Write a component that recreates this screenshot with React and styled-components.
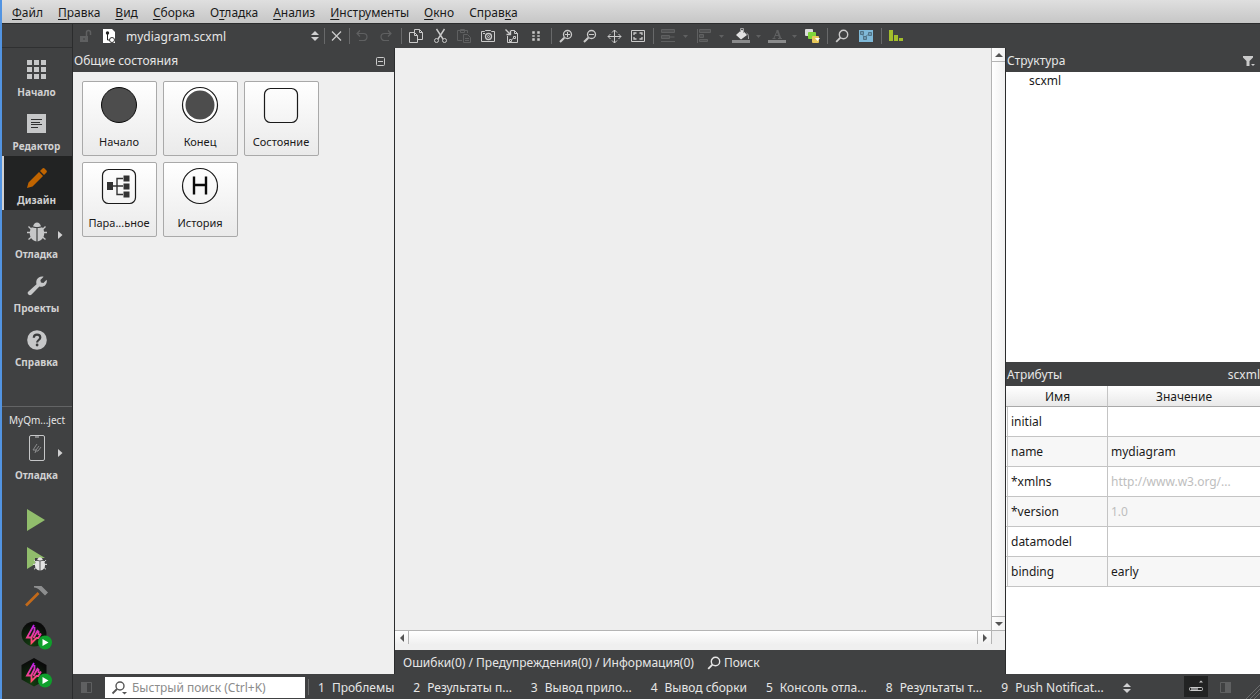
import { useState } from "react";
import styled, { createGlobalStyle } from "styled-components";

const GlobalStyle = createGlobalStyle`
  * {
    box-sizing: border-box;
  }
  body {
    margin: 0;
    font-family: "Noto Sans", "Open Sans", sans-serif;
    font-size: 12px;
    line-height: 16px;
    color: #1a1a1a;
    overflow: hidden;
  }
  button,
  input,
  select {
    font: inherit;
    color: inherit;
    margin: 0;
    padding: 0;
    border: none;
    border-radius: 0;
    background: none;
    outline: none;
  }
  svg {
    display: block;
    flex: none;
  }
`;

const Window = styled.div`
  height: 100vh;
  display: flex;
  flex-direction: column;
  border-left: 2px solid #5294e2;
  background-color: #404142;
`;
const MenuBar = styled.nav`
  display: flex;
  align-items: center;
  gap: 15px;
  height: 24px;
  flex: none;
  padding: 3px 10px 0;
  border-bottom: 1px solid #2b2c2d;
  background: linear-gradient(#dfdfdf, #c6c6c6);
`;
const MenuItem = styled.button`
  white-space: nowrap;
`;
const Mnemonic = styled.span`
  text-decoration: underline;
  text-decoration-thickness: 1px;
  text-underline-offset: 2px;
  text-decoration-skip-ink: none;
`;
const Body = styled.div`
  display: flex;
  flex: 1;
  min-height: 0;
`;

const Sidebar = styled.aside`
  display: flex;
  flex-direction: column;
  width: 71px;
  flex: none;
  border-right: 1px solid #2b2c2d;
  color: #d0d0d1;
`;
const SidebarTop = styled.div`
  height: 24px;
  flex: none;
  border-bottom: 1px solid #2f3031;
`;
const ModeButton = styled.button`
  position: relative;
  display: flex;
  flex-direction: column;
  align-items: center;
  height: 54px;
  flex: none;
  padding: 12px 3px 0 0;
  gap: 4px;
  border-left: 2px solid ${(props) => (props.$active ? "#d0d0d1" : "transparent")};
  background-color: ${(props) => (props.$active ? "#222323" : "transparent")};
  font-size: 10px;
  font-weight: bold;
`;
const Flyout = styled.svg`
  position: absolute;
  right: 9px;
  top: 21px;
`;
const Kit = styled.div`
  display: flex;
  flex-direction: column;
  margin-top: auto;
  height: 95px;
  flex: none;
  padding-top: 5px;
  border-top: 1px solid #636465;
`;
const KitName = styled.span`
  text-align: center;
  font-size: 10px;
  color: #e6e6e6;
`;
const KitButton = styled(ModeButton)`
  padding-top: 6px;
  gap: 5px;
`;
const RunList = styled.div`
  display: flex;
  flex-direction: column;
  align-items: center;
  padding: 0 2px 8px 0;
  flex: none;
`;
const RunButton = styled.button`
  display: flex;
  align-items: center;
  justify-content: center;
  width: 40px;
  height: 38px;
`;

const Main = styled.main`
  display: flex;
  flex-direction: column;
  flex: 1;
  min-width: 0;
  color: #e6e6e6;
`;
const Toolbar = styled.div`
  display: flex;
  align-items: center;
  height: 24px;
  flex: none;
`;
const ToolButton = styled.button`
  display: flex;
  align-items: center;
  justify-content: center;
  gap: 6px;
  width: ${(props) => (props.$menu ? "36px" : "24px")};
  height: 24px;
  flex: none;
  color: ${(props) => (props.$off ? "#5f6061" : "#cacaca")};
`;
const Separator = styled.div`
  width: 1px;
  height: 16px;
  flex: none;
  margin: ${(props) => (props.$tight ? "0" : "0 2px 0 3px")};
  background-color: #68696a;
`;
const FileBox = styled.div`
  display: flex;
  align-items: center;
  width: 227px;
  flex: none;
  padding: 0 5px 0 5px;
  gap: 10px;
`;
const FileSelect = styled.select`
  appearance: none;
  flex: 1;
  height: 24px;
  padding-top: 2px;
`;

const Panels = styled.div`
  display: flex;
  flex: 1;
  min-height: 0;
`;
const PaletteColumn = styled.section`
  display: flex;
  flex-direction: column;
  width: 322px;
  flex: none;
  border-right: 1px solid #2b2c2d;
`;
const PanelHeader = styled.header`
  display: flex;
  align-items: center;
  justify-content: space-between;
  height: 24px;
  flex: none;
  padding-top: 2px;
  padding-left: 1px;
  padding-right: ${(props) => props.$right || "0"};
`;
const Palette = styled.div`
  display: flex;
  flex-wrap: wrap;
  align-content: flex-start;
  gap: 6px;
  flex: 1;
  padding: 9px;
  background-color: #efefef;
`;
const PaletteItem = styled.button`
  display: flex;
  flex-direction: column;
  align-items: center;
  justify-content: space-between;
  width: 75px;
  height: 75px;
  padding: 4px 1px 5px 0;
  border: 1px solid #a9a9a9;
  border-radius: 2px;
  background: linear-gradient(#ffffff, #eaeaea);
  font-size: 11px;
  color: #1a1a1a;
`;

const Center = styled.section`
  display: flex;
  flex-direction: column;
  flex: 1;
  min-width: 0;
`;
const CanvasArea = styled.div`
  display: grid;
  grid-template-columns: 1fr 14px;
  grid-template-rows: 1fr 14px;
  flex: 1;
  padding-bottom: 6px;
  background-color: #efefef;
`;
const Canvas = styled.div`
  background-color: #eeeeee;
`;
const ScrollBar = styled.div`
  display: flex;
  flex-direction: ${(props) => (props.$vertical ? "column" : "row")};
  background: linear-gradient(${(props) => (props.$vertical ? "to right" : "to bottom")}, #ffffff, #f0f0f0);
  border: 0 solid #b4b4b4;
  border-left-width: ${(props) => (props.$vertical ? "1px" : "0")};
  border-top-width: ${(props) => (props.$vertical ? "0" : "1px")};
`;
const ScrollTrack = styled.div`
  flex: 1;
  border: 0 solid #b4b4b4;
  border-width: ${(props) => (props.$vertical ? "1px 0" : "0 1px")};
`;
const ScrollButton = styled.button`
  display: flex;
  align-items: center;
  justify-content: center;
  width: 13px;
  height: 13px;
  flex: none;
`;
const Corner = styled.div`
  border-top: 1px solid #b4b4b4;
  border-left: 1px solid #b4b4b4;
`;
const ErrorBar = styled.div`
  display: flex;
  align-items: center;
  gap: 12px;
  height: 24px;
  flex: none;
  padding: 2px 0 0 8px;
  white-space: nowrap;
`;
const SearchButton = styled.button`
  display: flex;
  align-items: center;
  gap: 2px;
`;

const Inspector = styled.section`
  display: flex;
  flex-direction: column;
  width: 255px;
  flex: none;
  border-left: 1px solid #2b2c2d;
`;
const Tree = styled.ul`
  flex: 1;
  margin: 0;
  padding: 1px 0 0 23px;
  background-color: #ffffff;
  color: #1a1a1a;
  list-style: none;
`;
const Attributes = styled.div`
  flex: 1;
  background-color: #ffffff;
`;
const Table = styled.table`
  width: 100%;
  table-layout: fixed;
  border-collapse: separate;
  border-spacing: 0;
  color: #1a1a1a;
`;
const HeadCell = styled.th`
  width: ${(props) => props.$width || "auto"};
  height: 21px;
  padding: 2px 0 0 2px;
  border-right: 1px solid #c4c4c4;
  border-bottom: 1px solid #a9a9a9;
  background: linear-gradient(#ffffff, #e9e9e9);
  font-weight: normal;

  &:last-child {
    padding-left: 0;
    border-right: none;
  }
`;
const Row = styled.tr`
  background-color: #ffffff;

  &:nth-child(even) {
    background-color: #f7f7f7;
  }
`;
const Cell = styled.td`
  height: 30px;
  padding: 2px 3px 0;
  border-right: 1px solid #c4c4c4;
  border-bottom: 1px solid #c4c4c4;
  color: ${(props) => (props.$muted ? "#bebebe" : "#1a1a1a")};

  &:first-child {
    padding-left: 5px;
    box-shadow: inset 1px 0 #ffffff, inset 2px 0 #c4c4c4;
  }
  &:last-child {
    border-right: none;
  }
`;

const StatusBar = styled.footer`
  display: flex;
  align-items: center;
  height: 25px;
  flex: none;
  white-space: nowrap;
`;
const StatusToggle = styled.button`
  display: flex;
  align-items: center;
  justify-content: center;
  width: 24px;
  height: 21px;
  flex: none;
  margin-left: ${(props) => props.$left || "0"};
  background-color: ${(props) => (props.$active ? "#222323" : "transparent")};
  color: ${(props) => (props.$off ? "#5f6061" : "#cacaca")};
`;
const Locator = styled.label`
  display: flex;
  align-items: center;
  gap: 3px;
  width: 200px;
  height: 21px;
  flex: none;
  margin: 2px 0 0 7px;
  padding-left: 6px;
  background-color: #ffffff;
`;
const LocatorInput = styled.input`
  flex: 1;
  min-width: 0;
  color: #1a1a1a;

  &::placeholder {
    color: #8c8c8c;
    opacity: 1;
  }
`;
const PaneTabs = styled.div`
  display: flex;
  align-items: center;
  gap: 19px;
  padding: 2px 0 0 7px;
`;
const PaneTab = styled.button`
  display: flex;
  gap: 7px;
`;
const StatusEnd = styled.div`
  display: flex;
  align-items: center;
  justify-content: flex-end;
  gap: 7px;
  flex: 1;
  align-self: stretch;
`;
const Grip = styled.svg`
  align-self: flex-end;
`;

const menus = [
  ["", "Ф", "айл"],
  ["", "П", "равка"],
  ["", "В", "ид"],
  ["", "С", "борка"],
  ["О", "т", "ладка"],
  ["", "А", "нализ"],
  ["", "И", "нструменты"],
  ["", "О", "кно"],
  ["Справ", "к", "а"],
];

const attributes = [
  { name: "initial", value: "" },
  { name: "name", value: "mydiagram" },
  { name: "*xmlns", value: "http://www.w3.org/...", muted: true },
  { name: "*version", value: "1.0", muted: true },
  { name: "datamodel", value: "" },
  { name: "binding", value: "early" },
];

const panes = [
  [1, "Проблемы"],
  [2, "Результаты п..."],
  [3, "Вывод прило..."],
  [4, "Вывод сборки"],
  [5, "Консоль отла..."],
  [8, "Результаты т..."],
  [9, "Push Notificat..."],
];

const Icon = ({ size = 16, children }) => (
  <svg width={size} height={size} viewBox={`0 0 ${size} ${size}`} fill="none" stroke="currentColor" aria-hidden="true">
    {children}
  </svg>
);

const MenuArrow = () => (
  <svg width="5" height="3" viewBox="0 0 5 3" fill="currentColor" aria-hidden="true">
    <path d="M0 0h5L2.5 3z" />
  </svg>
);

const UpDown = () => (
  <svg width="8" height="10" viewBox="0 0 8 10" fill="#d0d0d1" aria-hidden="true">
    <path d="M0 4 4 0l4 4zM0 6h8l-4 4z" />
  </svg>
);

const ScrollArrow = ({ d }) => (
  <svg width="8" height="8" viewBox="0 0 8 8" fill="#555" aria-hidden="true">
    <path d={d} />
  </svg>
);

const FlyoutArrow = () => (
  <Flyout width="5" height="8" viewBox="0 0 5 8" fill="#d0d0d1" aria-hidden="true">
    <path d="M0 0l4.5 4L0 8z" />
  </Flyout>
);

const Magnifier = ({ mark }) => (
  <Icon>
    <circle cx="9.5" cy="6.5" r="4" strokeWidth="1.3" />
    <path d="M6.3 9.7 2 14" strokeWidth="2" />
    {mark && <path d={mark} />}
  </Icon>
);

const Loupe = () => (
  <Icon>
    <circle cx="9.5" cy="6.5" r="4.2" strokeWidth="1.4" />
    <path d="M6.4 9.6 2.2 13.8" strokeWidth="1.8" />
  </Icon>
);

const Bug = ({ size = 20, color = "#c6c7c8" }) => (
  <svg width={size} height={size} viewBox="0 0 20 20" aria-hidden="true">
    <path
      d="M0 10.5h4M20 10.500h-4M1.500 4.500 5 8M18.500 4.500 15 8M1.500 17.500 5 14.500M18.500 17.500 15 14.500"
      stroke={color}
      strokeWidth="1.4"
    />
    <path d="M6 4.300C6.700 2 8.200.5 10 .5s3.300 1.500 4 3.800C12.500 5.200 7.500 5.200 6 4.300z" fill={color} />
    <path
      d="M9.400 5.900C7.500 5.900 5.800 5.600 4.800 5.200 3.300 7 2.800 9 2.800 11.500c0 4 2.900 7.500 6.600 7.900zM10.600 5.900c1.900 0 3.600-.3 4.600-.7 1.500 1.800 2 3.800 2 6.300 0 4-2.900 7.500-6.600 7.900z"
      fill={color}
    />
  </svg>
);

const GridIcon = () => (
  <svg width="20" height="20" viewBox="0 0 20 20" fill="#c6c7c8" aria-hidden="true">
    <path d="M0 0h5v5H0zM7 0h5v5H7zM14 0h5v5h-5zM0 7h5v5H0zM7 7h5v5H7zM14 7h5v5h-5zM0 14h5v5H0zM7 14h5v5H7zM14 14h5v5h-5z" />
  </svg>
);

const EditorIcon = () => (
  <svg width="20" height="20" viewBox="0 0 20 20" aria-hidden="true">
    <path d="M0 0h19v19H0z" fill="#c6c7c8" />
    <path d="M4 5.500h11M4 8.500h9M4 10.500h11M4 13.500h7" stroke="#303132" />
  </svg>
);

const PencilIcon = () => (
  <svg width="20" height="20" viewBox="0 0 20 20" fill="#c06400" aria-hidden="true">
    <path d="M0 20 1.500 14.500 12 4l4 4L5.500 18.500zM13 3l2-2c1.200-1.200 2-1.200 3 0l1 1c1.200 1.200 1.200 1.900 0 3l-2 2z" />
  </svg>
);

const WrenchIcon = () => (
  <svg width="20" height="20" viewBox="0 0 20 20" aria-hidden="true">
    <path
      d="M1.200 15.800 9.500 8.300C8.800 5.500 9.500 3 11.800 1.500 13.500.4 15.300.3 16.600.8L13.400 4l.5 2.400 2.500.6 3.200-3.200c.6 1.700.1 4-1.400 5.500-1.500 1.400-3.700 1.800-5.800 1.200l-7.800 8.100c-.9.900-2.300.9-3.200 0-.9-.9-1-2-.2-2.800z"
      fill="#c6c7c8"
    />
  </svg>
);

const HelpIcon = () => (
  <svg width="20" height="20" viewBox="0 0 20 20" aria-hidden="true">
    <circle cx="10" cy="10" r="9.800" fill="#c6c7c8" />
    <path
      d="M6.800 7.700C6.900 5.700 8.200 4.600 10 4.600c2 0 3.300 1.100 3.300 2.900 0 2.500-3.200 2.500-3.200 5"
      fill="none"
      stroke="#3a3b3c"
      strokeWidth="2.200"
    />
    <circle cx="10.100" cy="15" r="1.400" fill="#3a3b3c" />
  </svg>
);

const PhoneIcon = () => (
  <svg width="18" height="28" viewBox="0 0 18 28" fill="none" aria-hidden="true">
    <rect x="1.500" y="1.500" width="15" height="25" rx="1.500" stroke="#c6c7c8" />
    <path d="M7 3h4" stroke="#c6c7c8" />
    <path d="M9 10l-4 6h3l-1 3M11 12l-3 4M13 13l-3 4h-2" stroke="#8c8d8e" />
  </svg>
);

const RunIcon = ({ debug }) => (
  <svg width="22" height="26" viewBox="0 0 22 26" aria-hidden="true">
    <path d="M2 2v22l18-11z" fill="#91bd6c" />
    {debug && (
      <g transform="translate(8 12)">
        <path d="M2 1h10v12H2z" fill="#404142" />
        <Bug size={14} color="#e4e4e4" />
      </g>
    )}
  </svg>
);

const HammerIcon = () => (
  <svg width="24" height="24" viewBox="0 0 24 24" aria-hidden="true">
    <path d="M2 21.500 14.500 9" stroke="#c26a1a" strokeWidth="2.600" />
    <path d="M10 2h7.500l6.500 6.500-3 3-5.500-5.500C14 4.500 12 3.600 10 3.500z" fill="#8d8e8f" />
  </svg>
);

const QmlRunIcon = ({ hex }) => (
  <svg width="32" height="36" viewBox="0 -4 32 36" aria-hidden="true">
    <defs>
      <linearGradient id="flame" gradientUnits="userSpaceOnUse" x1="0" y1="4" x2="0" y2="24">
        <stop offset="0" stopColor="#b01cf0" />
        <stop offset=".5" stopColor="#ea3aa8" />
        <stop offset="1" stopColor="#ff5060" />
      </linearGradient>
      <radialGradient id="shade" cx=".4" cy=".9" r=".8">
        <stop offset="0" stopColor="#123d10" />
        <stop offset="1" stopColor="#0a0a0a" />
      </radialGradient>
    </defs>
    {hex ? (
      <path d="M14 0 26.500 7v14.500L14 28.500 1.500 21.500V7z" fill="url(#shade)" />
    ) : (
      <circle cx="14" cy="14" r="12.500" fill="url(#shade)" />
    )}
    <path
      d="M14 5 7 17.500h4.500V23l5-5h2.500M14.500 7v4L11.500 17M18 10l-4.500 8M18.500 11v4M21 13.500l-3 5"
      stroke="url(#flame)"
      strokeWidth="1.800"
      fill="none"
    />
    <circle cx="25" cy="22.500" r="7" fill="#0fa02c" />
    <path d="M22.500 19v7l6-3.500z" fill="#fff" />
  </svg>
);

const modes = [
  { label: "Начало", icon: <GridIcon /> },
  { label: "Редактор", icon: <EditorIcon /> },
  { label: "Дизайн", icon: <PencilIcon /> },
  { label: "Отладка", icon: <Bug />, flyout: true },
  { label: "Проекты", icon: <WrenchIcon /> },
  { label: "Справка", icon: <HelpIcon /> },
];

const StateIcon = ({ children }) => (
  <svg width="38" height="38" viewBox="0 0 38 38" fill="none" stroke="#1a1a1a" aria-hidden="true">
    {children}
  </svg>
);

const states = [
  {
    label: "Начало",
    icon: <circle cx="19" cy="19" r="17.500" fill="#4d4d4d" stroke="#0a0a0a" />,
  },
  {
    label: "Конец",
    icon: (
      <>
        <circle cx="19" cy="19" r="17.500" fill="#fff" strokeWidth="1.200" />
        <circle cx="19" cy="19" r="14.500" fill="#4d4d4d" stroke="none" />
      </>
    ),
  },
  {
    label: "Состояние",
    icon: <rect x="2.500" y="2.500" width="33" height="34" rx="6" strokeWidth="1.200" />,
  },
  {
    label: "Пара...ьное",
    icon: (
      <>
        <rect x="2.500" y="2.500" width="33" height="34" rx="6" strokeWidth="1.200" />
        <path d="M13 19h10M23 11.500h-6v16h6" stroke="#333" strokeWidth="1.400" />
        <path d="M7 15h6v8H7zM23.500 8.500h6v6h-6zM23.500 16.500h6v6h-6zM23.500 24.500h6v6h-6z" fill="#333" stroke="none" />
      </>
    ),
  },
  {
    label: "История",
    icon: (
      <>
        <circle cx="19" cy="19" r="17.500" strokeWidth="1.200" />
        <path d="M13 9.500v18M25 9.500v18M13 18h12" stroke="#0a0a0a" strokeWidth="2.400" />
      </>
    ),
  },
];

function ModeBar() {
  const [current, setCurrent] = useState("Дизайн");

  return (
    <Sidebar>
      <SidebarTop />
      {modes.map((mode) => (
        <ModeButton key={mode.label} $active={mode.label === current} onClick={() => setCurrent(mode.label)}>
          {mode.icon}
          <span>{mode.label}</span>
          {mode.flyout && <FlyoutArrow />}
        </ModeButton>
      ))}
      <Kit>
        <KitName>MyQm...ject</KitName>
        <KitButton>
          <PhoneIcon />
          <span>Отладка</span>
          <FlyoutArrow />
        </KitButton>
      </Kit>
      <RunList>
        <RunButton aria-label="Запустить">
          <RunIcon />
        </RunButton>
        <RunButton aria-label="Начать отладку">
          <RunIcon debug />
        </RunButton>
        <RunButton aria-label="Собрать">
          <HammerIcon />
        </RunButton>
        <RunButton aria-label="Просмотр">
          <QmlRunIcon />
        </RunButton>
        <RunButton aria-label="Просмотр проекта">
          <QmlRunIcon hex />
        </RunButton>
      </RunList>
    </Sidebar>
  );
}

function EditorToolbar() {
  return (
    <Toolbar>
      <ToolButton $off aria-label="Блокировка">
        <Icon>
          <path d="M3 8h8v6H3z" fill="currentColor" stroke="none" />
          <path d="M9.500 8V4.500a2 2 0 0 1 4 0V7" strokeWidth="1.500" />
          <path d="M7 10v2" stroke="#404142" />
        </Icon>
      </ToolButton>
      <FileBox>
        <svg width="14" height="16" viewBox="0 0 14 16" aria-hidden="true">
          <path d="M1 1h9l3 3v11H1z" fill="#fff" />
          <circle cx="5.500" cy="5" r="1.700" fill="#222" />
          <path d="M5.500 6v6h3" stroke="#222" fill="none" />
          <circle cx="10" cy="12" r="2.500" fill="#fff" stroke="#333" />
        </svg>
        <FileSelect aria-label="Открытый документ">
          <option>mydiagram.scxml</option>
        </FileSelect>
        <UpDown />
      </FileBox>
      <Separator $tight />
      <ToolButton aria-label="Закрыть">
        <Icon>
          <path d="M3 3.500l9 9M12 3.500l-9 9" strokeWidth="1.300" />
        </Icon>
      </ToolButton>
      <Separator $tight />
      <ToolButton $off aria-label="Отменить">
        <Icon>
          <path d="M6 2.500 3 5.500l3 3M3 5.500h6.500a3.500 3.500 0 0 1 0 7H5" strokeWidth="1.200" />
        </Icon>
      </ToolButton>
      <ToolButton $off aria-label="Повторить">
        <Icon>
          <path d="M10 2.500l3 3-3 3M13 5.500H6.500a3.500 3.500 0 0 0 0 7H11" strokeWidth="1.200" />
        </Icon>
      </ToolButton>
      <Separator />
      <ToolButton aria-label="Копировать">
        <Icon>
          <path d="M6.500 4.500V1.500h5l3 3v7h-5" />
          <path d="M11.500 1.500v3h3" />
          <path d="M1.500 4.500h5l3 3v7h-8zM6.500 4.500v3h3" />
        </Icon>
      </ToolButton>
      <ToolButton aria-label="Вырезать">
        <Icon>
          <path d="M4.500 1 11 11M12.500 1 6 11" strokeWidth="1.400" />
          <circle cx="4.500" cy="12.500" r="2" />
          <circle cx="12.500" cy="12.500" r="2" />
        </Icon>
      </ToolButton>
      <ToolButton $off aria-label="Вставить">
        <Icon>
          <path d="M6 12.500H1.500v-10h10V5M4.500 1.500h4v3h-4z" />
          <path d="M7.500 6.500h4l3 3v5h-7zM9 10.500h4M9 12.500h4" />
        </Icon>
      </ToolButton>
      <ToolButton aria-label="Снимок экрана">
        <Icon>
          <path d="M1.500 3.500h3l1-1h5l1 1h3v10h-13zM3 5.500h2" />
          <circle cx="8.500" cy="8.500" r="3" strokeWidth="1.300" />
          <circle cx="8.500" cy="8.500" r="1" />
        </Icon>
      </ToolButton>
      <ToolButton aria-label="Экспорт">
        <Icon>
          <path d="M3.500 8v6.500h10v-9l-3-3H7M10.500 2.500v3h3" />
          <path d="M1.500 1.500 6 6M6.500 2.500v4h-4" strokeWidth="1.400" />
          <path d="M5.500 11.500h2v2h-2zM9.500 8.500h2v2h-2zM8 11h1" />
        </Icon>
      </ToolButton>
      <ToolButton aria-label="Сетка">
        <Icon>
          <path
            d="M4 3h3v3H4zM9 3h3v3H9zM4 7h3v2H4zM9 7h3v2H9zM4 10h3v3H4zM9 10h3v3H9z"
            fill="currentColor"
            stroke="#404142"
            strokeWidth=".5"
          />
        </Icon>
      </ToolButton>
      <Separator />
      <ToolButton aria-label="Увеличить">
        <Magnifier mark="M7 6.500h5M9.500 4v5" />
      </ToolButton>
      <ToolButton aria-label="Уменьшить">
        <Magnifier mark="M7 6.500h5" />
      </ToolButton>
      <ToolButton aria-label="Переместить">
        <Icon>
          <path d="M8.500 2v13M2 8.500h13" />
          <path d="M6 4.500l2.500-2.500L11 4.500M6 12.500 8.500 15l2.500-2.500M4.500 6 2 8.500 4.500 11M12.500 6 15 8.500 12.500 11" />
        </Icon>
      </ToolButton>
      <ToolButton aria-label="Вписать в окно">
        <Icon>
          <path d="M1.500 2.500h13v11h-13z" />
          <path d="M4 7V5h2.500M9.500 5H12v2M12 9v2H9.500M6.500 11H4V9" strokeWidth="1.300" />
        </Icon>
      </ToolButton>
      <Separator />
      <ToolButton $menu $off aria-label="Выравнивание">
        <Icon>
          <path d="M.5 1.500h13v3H.5zM.5 7.500h8v3h-8zM8.500 9h5M0 13.500h14" fill="#505152" />
        </Icon>
        <MenuArrow />
      </ToolButton>
      <ToolButton $menu $off aria-label="Распределение">
        <Icon>
          <path d="M.5 1v14M2.500 1.500h11v3h-11zM2.500 6.500h4v3h-4zM2.500 11.500h8v2h-8z" fill="#505152" />
        </Icon>
        <MenuArrow />
      </ToolButton>
      <ToolButton $menu $off aria-label="Цвет заливки">
        <Icon size={18}>
          <path d="M0 13h18v3H0z" fill="#8a8b8c" stroke="none" />
          <path d="M4 8 10 2.500l5 5.500-6 4.500z" fill="#e2e2e2" stroke="none" />
          <path d="M8.500 5V1.500h3V6M14.500 6c2 1 2 3 2 6" stroke="#a0a1a2" />
        </Icon>
        <MenuArrow />
      </ToolButton>
      <ToolButton $menu $off aria-label="Цвет шрифта">
        <Icon size={18}>
          <path d="M0 13h18v3H0z" fill="#8a8b8c" stroke="none" />
          <path d="M4.500 11.500h3M10 11.500h4M5.800 11.500 9.500 3M7 8.500h4.500" />
          <path d="M9.300 3l3 8.500" strokeWidth="2" />
        </Icon>
        <MenuArrow />
      </ToolButton>
      <ToolButton aria-label="Цветовая тема">
        <Icon>
          <rect x="1" y="1" width="8" height="7" rx="1" fill="#dcdcdc" stroke="none" />
          <rect x="4" y="4" width="8" height="7" rx="1" fill="#7fd63a" stroke="none" />
          <rect x="8" y="8" width="7" height="7" rx="1" fill="#e8c95a" stroke="none" />
          <path d="M11 10h5l-2.500 3z" fill="#fff" stroke="none" />
        </Icon>
      </ToolButton>
      <Separator />
      <ToolButton aria-label="Поиск">
        <Loupe />
      </ToolButton>
      <ToolButton aria-label="Навигатор">
        <Icon>
          <path d="M1 2h14v12H1z" fill="#7fb9d8" stroke="none" />
          <path d="M4 5l2 4.500M6 9.500 11 6" stroke="#5d8297" />
          <path d="M2.500 3.500h3v3h-3zM5.500 8.500h3v3h-3zM10.500 4.500h3v3h-3z" fill="#6d98b0" stroke="#507488" />
        </Icon>
      </ToolButton>
      <Separator />
      <ToolButton aria-label="Статистика">
        <Icon>
          <path d="M1 2h4v11H1zM6 7h4v6H6zM11 10h4v3h-4z" fill="#a3bd2c" stroke="none" />
        </Icon>
      </ToolButton>
    </Toolbar>
  );
}

function Editor() {
  return (
    <Center>
      <CanvasArea>
        <Canvas />
        <ScrollBar $vertical>
          <ScrollButton aria-label="Вверх">
            <ScrollArrow d="M0 6 4 2l4 4z" />
          </ScrollButton>
          <ScrollTrack $vertical />
          <ScrollButton aria-label="Вниз">
            <ScrollArrow d="M0 2h8L4 6z" />
          </ScrollButton>
        </ScrollBar>
        <ScrollBar>
          <ScrollButton aria-label="Влево">
            <ScrollArrow d="M6 0v8L2 4z" />
          </ScrollButton>
          <ScrollTrack />
          <ScrollButton aria-label="Вправо">
            <ScrollArrow d="M2 0v8l4-4z" />
          </ScrollButton>
        </ScrollBar>
        <Corner />
      </CanvasArea>
      <ErrorBar>
        <span>Ошибки(0) / Предупреждения(0) / Информация(0)</span>
        <SearchButton>
          <Loupe />
          Поиск
        </SearchButton>
      </ErrorBar>
    </Center>
  );
}

function Properties() {
  return (
    <Inspector>
      <PanelHeader $right="4px">
        <span>Структура</span>
        <svg width="14" height="14" viewBox="0 0 14 14" fill="#cacaca" aria-hidden="true">
          <path d="M1 2h10v1.500L7.500 7v5h-3V7L1 3.500zM9 10h4l-2 2z" />
        </svg>
      </PanelHeader>
      <Tree>
        <li>scxml</li>
      </Tree>
      <PanelHeader>
        <span>Атрибуты</span>
        <span>scxml</span>
      </PanelHeader>
      <Attributes>
        <Table>
          <thead>
            <tr>
              <HeadCell $width="102px">Имя</HeadCell>
              <HeadCell>Значение</HeadCell>
            </tr>
          </thead>
          <tbody>
            {attributes.map((item) => (
              <Row key={item.name}>
                <Cell>{item.name}</Cell>
                <Cell $muted={item.muted}>{item.value}</Cell>
              </Row>
            ))}
          </tbody>
        </Table>
      </Attributes>
    </Inspector>
  );
}

function Status() {
  return (
    <StatusBar>
      <StatusToggle $off $left="1px" aria-label="Боковая панель">
        <Icon>
          <path d="M3.500 3.500h10v10h-10z" />
          <path d="M3 3h6v11H3z" fill="currentColor" stroke="none" />
        </Icon>
      </StatusToggle>
      <Locator>
        <svg width="18" height="16" viewBox="0 0 18 16" fill="none" stroke="#555" aria-hidden="true">
          <circle cx="9" cy="6" r="4" strokeWidth="1.400" />
          <path d="M6 9l-4.500 4.500" strokeWidth="1.800" />
          <path d="M11 12h5l-2.500 2.500z" fill="#555" stroke="none" />
        </svg>
        <LocatorInput aria-label="Быстрый поиск" placeholder="Быстрый поиск (Ctrl+K)" />
      </Locator>
      <Separator />
      <PaneTabs>
        {panes.map(([number, title]) => (
          <PaneTab key={number}>
            <span>{number}</span>
            <span>{title}</span>
          </PaneTab>
        ))}
        <UpDown />
      </PaneTabs>
      <StatusEnd>
        <StatusToggle $active aria-label="Панель вывода">
          <Icon>
            <rect x="1.500" y="8.500" width="13" height="3" rx="1" />
            <path d="M3 10h7" stroke="#8a8b8c" strokeWidth="2" />
            <path d="M11 3.500h4L13 1.500z" fill="currentColor" stroke="none" />
          </Icon>
        </StatusToggle>
        <StatusToggle $off aria-label="Правая боковая панель">
          <Icon>
            <path d="M1.500 3.500h10v10h-10z" />
            <path d="M6 3h6v11H6z" fill="currentColor" stroke="none" />
          </Icon>
        </StatusToggle>
        <Grip width="14" height="14" viewBox="0 0 14 14" stroke="#6a6b6c" aria-hidden="true">
          <path d="M0 14 14 0M4 14 14 4M8 14l6-6" />
        </Grip>
      </StatusEnd>
    </StatusBar>
  );
}

function App() {
  return (
    <Window>
      <GlobalStyle />
      <MenuBar>
        {menus.map(([before, key, after]) => (
          <MenuItem key={before + key + after}>
            {before}
            <Mnemonic>{key}</Mnemonic>
            {after}
          </MenuItem>
        ))}
      </MenuBar>
      <Body>
        <ModeBar />
        <Main>
          <EditorToolbar />
          <Panels>
            <PaletteColumn>
              <PanelHeader $right="8px">
                <span>Общие состояния</span>
                <svg width="11" height="11" viewBox="0 0 11 11" fill="none" stroke="#cacaca" aria-hidden="true">
                  <rect x="1.500" y="1.500" width="8" height="8" rx="1" />
                  <path d="M3 5.500h5" />
                </svg>
              </PanelHeader>
              <Palette>
                {states.map((state) => (
                  <PaletteItem key={state.label}>
                    <StateIcon>{state.icon}</StateIcon>
                    <span>{state.label}</span>
                  </PaletteItem>
                ))}
              </Palette>
            </PaletteColumn>
            <Editor />
            <Properties />
          </Panels>
          <Status />
        </Main>
      </Body>
    </Window>
  );
}

export default App;
